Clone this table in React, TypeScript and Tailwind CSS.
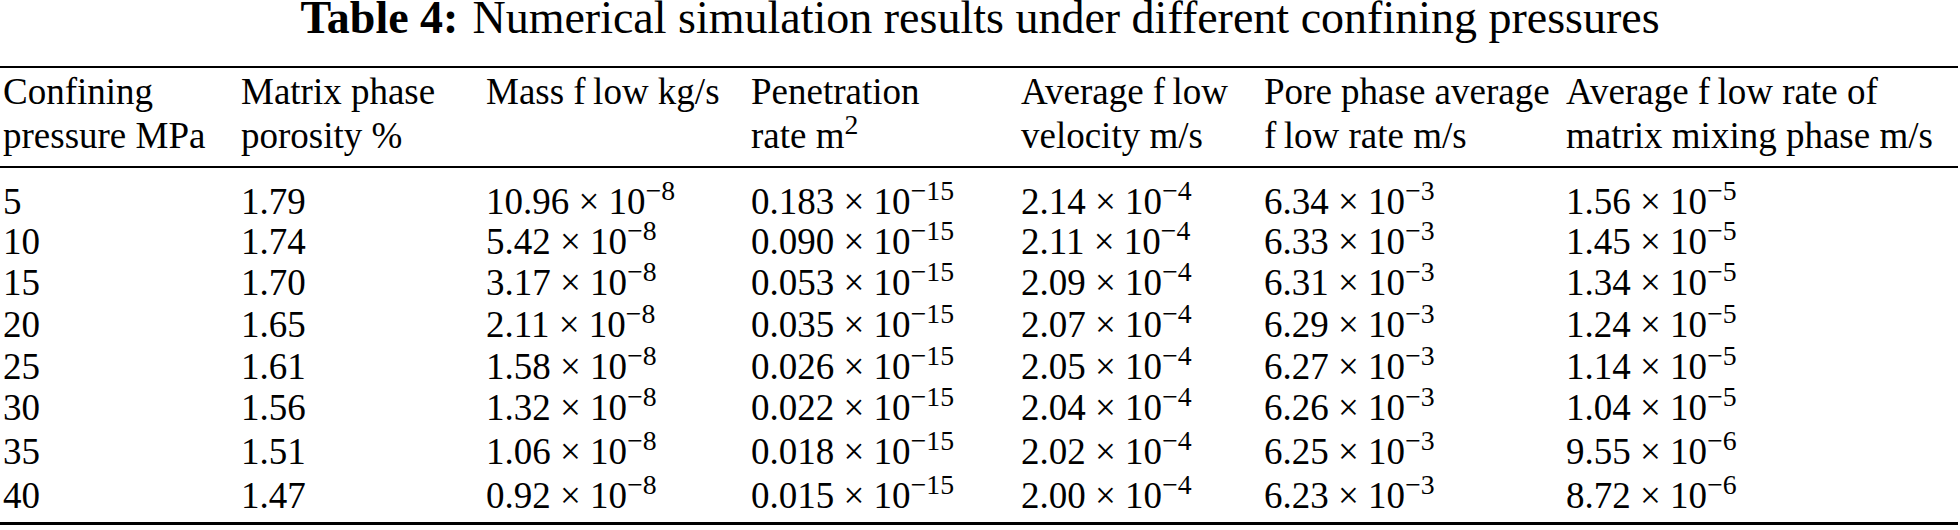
const HEAD: [string, string][] = [
  ['Confining', 'pressure MPa'],
  ['Matrix phase', 'porosity %'],
  ['Mass f\u2009low kg/s', ''],
  ['Penetration', 'rate m'],
  ['Average f\u2009low', 'velocity m/s'],
  ['Pore phase average', 'f\u2009low rate m/s'],
  ['Average f\u2009low rate of', 'matrix mixing phase m/s'],
]

type Sci = [string, string]

const ROWS: { h: string; p: string; por: string; mass: Sci; pen: Sci; vel: Sci; pore: Sci; mix: Sci }[] = [
  { h: 'h-[40px]', p: '5', por: '1.79', mass: ['10.96', '8'], pen: ['0.183', '15'], vel: ['2.14', '4'], pore: ['6.34', '3'], mix: ['1.56', '5'] },
  { h: 'h-[40px]', p: '10', por: '1.74', mass: ['5.42', '8'], pen: ['0.090', '15'], vel: ['2.11', '4'], pore: ['6.33', '3'], mix: ['1.45', '5'] },
  { h: 'h-[42px]', p: '15', por: '1.70', mass: ['3.17', '8'], pen: ['0.053', '15'], vel: ['2.09', '4'], pore: ['6.31', '3'], mix: ['1.34', '5'] },
  { h: 'h-[42px]', p: '20', por: '1.65', mass: ['2.11', '8'], pen: ['0.035', '15'], vel: ['2.07', '4'], pore: ['6.29', '3'], mix: ['1.24', '5'] },
  { h: 'h-[41px]', p: '25', por: '1.61', mass: ['1.58', '8'], pen: ['0.026', '15'], vel: ['2.05', '4'], pore: ['6.27', '3'], mix: ['1.14', '5'] },
  { h: 'h-[42px]', p: '30', por: '1.56', mass: ['1.32', '8'], pen: ['0.022', '15'], vel: ['2.04', '4'], pore: ['6.26', '3'], mix: ['1.04', '5'] },
  { h: 'h-[45px]', p: '35', por: '1.51', mass: ['1.06', '8'], pen: ['0.018', '15'], vel: ['2.02', '4'], pore: ['6.25', '3'], mix: ['9.55', '6'] },
  { h: 'h-[44px]', p: '40', por: '1.47', mass: ['0.92', '8'], pen: ['0.015', '15'], vel: ['2.00', '4'], pore: ['6.23', '3'], mix: ['8.72', '6'] },
]

const COLS = 'grid grid-cols-[241px_245px_265px_270px_243px_302px_1fr]'

function Sci({ v }: { v: Sci }) {
  return (
    <span>
      {v[0]} × 10<sup>−{v[1]}</sup>
    </span>
  )
}

export default function App() {
  return (
    <div className="w-[1960px] h-[530px] bg-white text-black font-['Liberation_Serif',serif] overflow-hidden">
      <div className="h-[36px] text-[46px] leading-[36px] text-center whitespace-nowrap">
        <span className="font-bold">Table 4:</span>
        <span className="ml-[14px]">Numerical simulation results under different confining pressures</span>
      </div>

      <div className="mt-[30px] mr-[2px] text-[37px]">
        <div className="border-t-2 border-b-2 border-black pt-[2px] pb-[8px]">
          <div className={`${COLS} leading-[44px] whitespace-nowrap`}>
            {HEAD.map(([a, b], i) => (
              <div key={i} className={i === 0 ? 'pl-[3px]' : ''}>
                <div>{a}</div>
                {b && (
                  <div>
                    {b}
                    {i === 3 && <sup>2</sup>}
                  </div>
                )}
              </div>
            ))}
          </div>
        </div>

        <div className="pt-[14px] pb-[4px] border-b-[3px] border-black">
          {ROWS.map((r, i) => (
            <div key={i} className={`${COLS} ${r.h} items-center whitespace-nowrap leading-[40px]`}>
              <div className="pl-[3px]">{r.p}</div>
              <div>{r.por}</div>
              <div><Sci v={r.mass} /></div>
              <div><Sci v={r.pen} /></div>
              <div><Sci v={r.vel} /></div>
              <div><Sci v={r.pore} /></div>
              <div><Sci v={r.mix} /></div>
            </div>
          ))}
        </div>
      </div>
    </div>
  )
}
